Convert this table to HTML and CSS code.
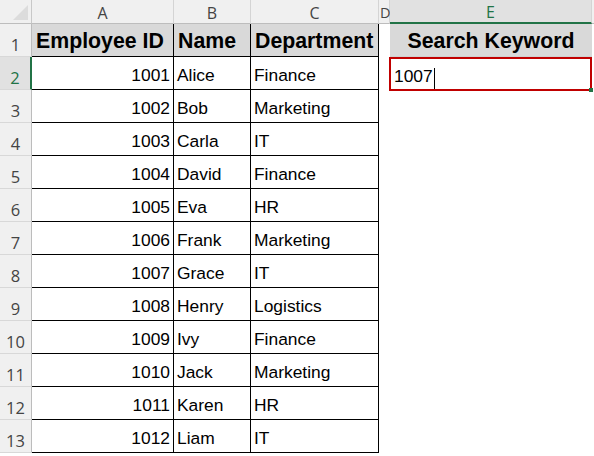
FILE: index.html
```html
<!DOCTYPE html>
<html>
<head>
<meta charset="utf-8">
<link rel="stylesheet" href="styles.css">
</head>
<body>
<div class="sheet">
  <div class="corner"><span class="tri"></span></div>
  <div class="ch">A</div>
  <div class="ch">B</div>
  <div class="ch">C</div>
  <div class="ch chd">D</div>
  <div class="ch sel">E</div>
  <div class="ch last"></div>

  <div class="rh">1</div>
  <div class="c hd bl">Employee ID</div>
  <div class="c hd bl">Name</div>
  <div class="c hd bl">Department</div>
  <div class="c"></div>
  <div class="c hd khd">Search Keyword</div>
  <div class="c"></div>

  <div class="rh rsel">2</div>
  <div class="c bl num act">1001</div>
  <div class="c bl">Alice</div>
  <div class="c bl">Finance</div>
  <div class="c"></div>
  <div class="c inp">1007<span class="caret"></span><span class="handle"></span></div>
  <div class="c"></div>

  <div class="rh">3</div><div class="c bl num">1002</div><div class="c bl">Bob</div><div class="c bl">Marketing</div><div class="c"></div><div class="c"></div><div class="c"></div>
  <div class="rh">4</div><div class="c bl num">1003</div><div class="c bl">Carla</div><div class="c bl">IT</div><div class="c"></div><div class="c"></div><div class="c"></div>
  <div class="rh">5</div><div class="c bl num">1004</div><div class="c bl">David</div><div class="c bl">Finance</div><div class="c"></div><div class="c"></div><div class="c"></div>
  <div class="rh">6</div><div class="c bl num">1005</div><div class="c bl">Eva</div><div class="c bl">HR</div><div class="c"></div><div class="c"></div><div class="c"></div>
  <div class="rh">7</div><div class="c bl num">1006</div><div class="c bl">Frank</div><div class="c bl">Marketing</div><div class="c"></div><div class="c"></div><div class="c"></div>
  <div class="rh">8</div><div class="c bl num">1007</div><div class="c bl">Grace</div><div class="c bl">IT</div><div class="c"></div><div class="c"></div><div class="c"></div>
  <div class="rh">9</div><div class="c bl num">1008</div><div class="c bl">Henry</div><div class="c bl">Logistics</div><div class="c"></div><div class="c"></div><div class="c"></div>
  <div class="rh">10</div><div class="c bl num">1009</div><div class="c bl">Ivy</div><div class="c bl">Finance</div><div class="c"></div><div class="c"></div><div class="c"></div>
  <div class="rh">11</div><div class="c bl num">1010</div><div class="c bl">Jack</div><div class="c bl">Marketing</div><div class="c"></div><div class="c"></div><div class="c"></div>
  <div class="rh">12</div><div class="c bl num">1011</div><div class="c bl">Karen</div><div class="c bl">HR</div><div class="c"></div><div class="c"></div><div class="c"></div>
  <div class="rh">13</div><div class="c bl num">1012</div><div class="c bl">Liam</div><div class="c bl">IT</div><div class="c"></div><div class="c"></div><div class="c"></div>
</div>
</body>
</html>
```

FILE: styles.css
```css
html, body {
  margin: 0;
  padding: 0;
  background: #ffffff;
}
.sheet {
  display: grid;
  grid-template-columns: 32px 142px 77px 128px 11px 202px 2px;
  grid-template-rows: 24px repeat(13, 33px);
  width: 594px;
  font-family: "Liberation Sans", Arial, sans-serif;
}
.corner {
  background: #f0f0f0;
  border-right: 1px solid #c8c8c8;
  border-bottom: 1px solid #bdbdbd;
  position: relative;
  box-sizing: border-box;
}
.tri {
  position: absolute;
  right: 3px;
  bottom: 3px;
  width: 0;
  height: 0;
  border-left: 15px solid transparent;
  border-bottom: 15px solid #dcdcdc;
}
.ch {
  background: #f0f0f0;
  border-right: 1px solid #d4d4d4;
  border-bottom: 1px solid #bdbdbd;
  box-sizing: border-box;
  display: flex;
  align-items: center;
  justify-content: center;
  font-family: "Open Sans", "Noto Sans", sans-serif;
  font-size: 16px;
  color: #444444;
  padding-top: 2px;
}
.chd {
  justify-content: flex-start;
  padding-left: 1px;
  font-size: 14.5px;
  letter-spacing: -1px;
}
.ch.sel {
  background: #e1e1e1;
  color: #217346;
  border-bottom: 2px solid #217346;
}
.ch.last {
  border-right: none;
}
.rh {
  background: #f0f0f0;
  border-right: 1px solid #bcbcbc;
  border-bottom: 1px solid #d8d8d8;
  box-sizing: border-box;
  display: flex;
  align-items: flex-end;
  justify-content: center;
  padding-bottom: 0;
  font-family: "Open Sans", "Noto Sans", sans-serif;
  font-size: 16.5px;
  color: #444444;
}
.rh.rsel {
  background: #e1e1e1;
  color: #217346;
  border-right: 2px solid #217346;
}
.c {
  box-sizing: border-box;
  display: flex;
  align-items: flex-end;
  padding: 0 3px 3px 3px;
  font-size: 17.4px;
  color: #000000;
  white-space: nowrap;
  position: relative;
}
.bl {
  border-right: 1px solid #000000;
  border-bottom: 1px solid #000000;
}
.num {
  justify-content: flex-end;
}
.hd {
  background: #d9d9d9;
  font-weight: bold;
  font-size: 21.3px;
  padding-bottom: 2px;
}
.bl.hd {
  padding-left: 4px;
}
.khd {
  justify-content: center;
  border-bottom: 1px solid #d0d0d0;
}
.inp {
  border: 2px solid #c00000;
  padding-left: 3px;
  padding-bottom: 2px;
  margin-left: -1px;
  margin-bottom: -1px;
}
.caret {
  display: inline-block;
  width: 1px;
  height: 21px;
  background: #000000;
  margin-left: 1px;
  margin-bottom: -2px;
}
.handle {
  position: absolute;
  right: -3px;
  bottom: -3px;
  width: 4px;
  height: 4px;
  background: #217346;
}
```
